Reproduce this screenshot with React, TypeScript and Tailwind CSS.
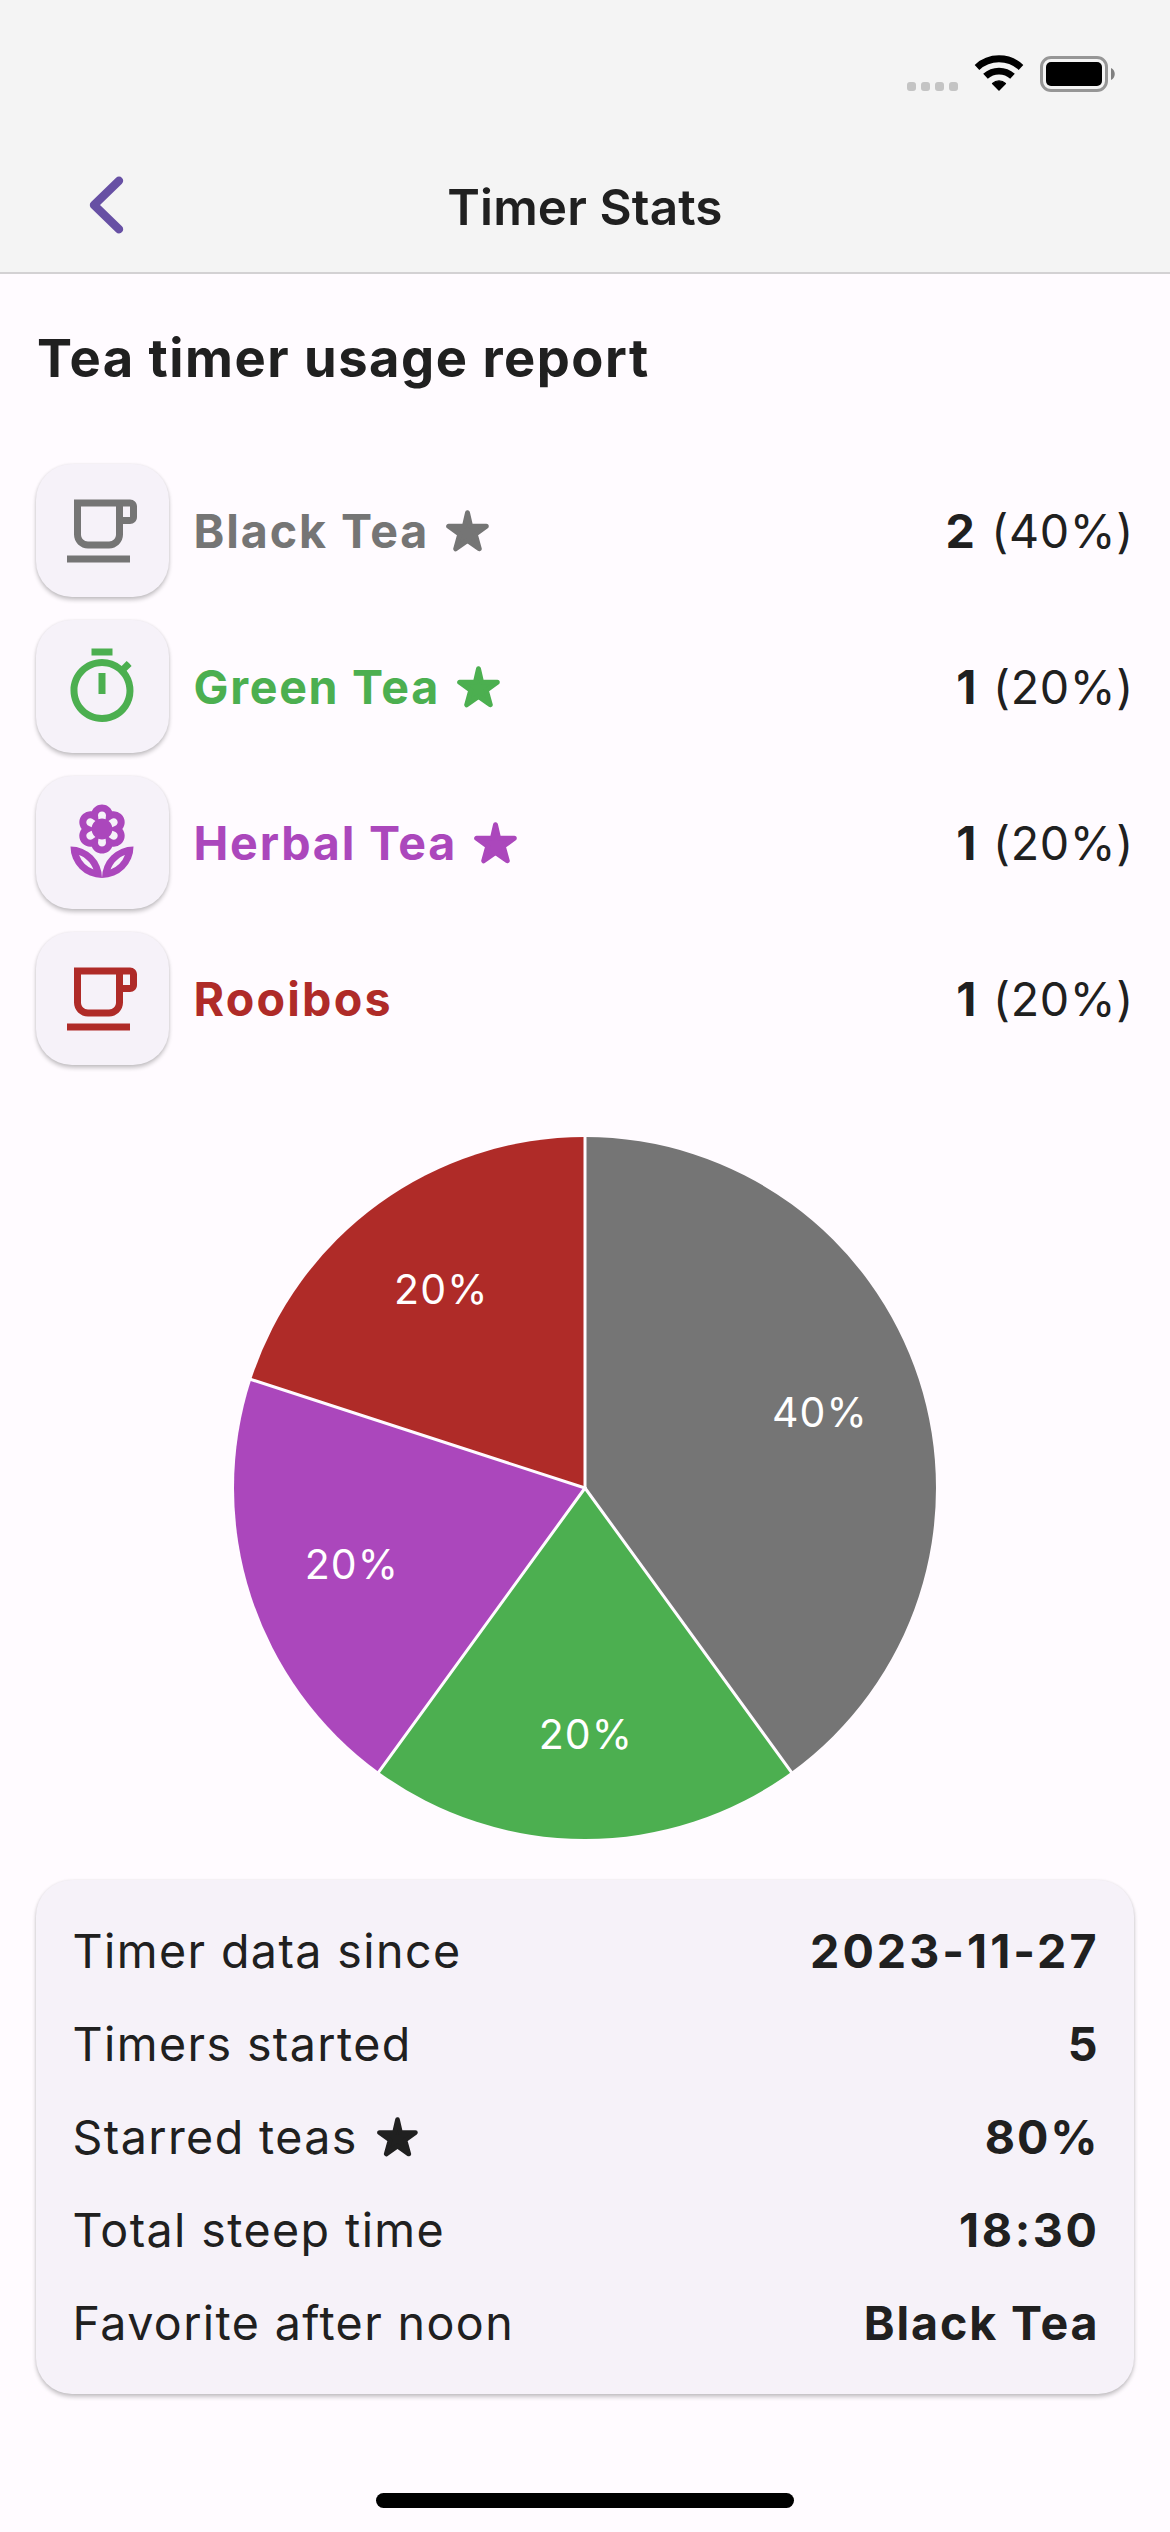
import type { ReactNode } from "react";
import { MdOutlineLocalCafe, MdOutlineLocalFlorist, MdOutlineTimer } from "react-icons/md";

type Tea = {
  name: string;
  starred: boolean;
  count: number;
  percent: number;
  color: string;
  fill: string;
  tracking: string;
  icon: ReactNode;
};

const teas: Tea[] = [
  { name: "Black Tea", starred: true, count: 2, percent: 40, color: "text-[#757575]", fill: "#757575", tracking: "tracking-[1.9px]", icon: <MdOutlineLocalCafe size={84} /> },
  { name: "Green Tea", starred: true, count: 1, percent: 20, color: "text-[#4caf50]", fill: "#4caf50", tracking: "tracking-[1.7px]", icon: <MdOutlineTimer size={84} /> },
  { name: "Herbal Tea", starred: true, count: 1, percent: 20, color: "text-[#ab47bc]", fill: "#ab47bc", tracking: "tracking-[1.8px]", icon: <MdOutlineLocalFlorist size={84} /> },
  { name: "Rooibos", starred: false, count: 1, percent: 20, color: "text-[#af2b28]", fill: "#af2b28", tracking: "tracking-[2.2px]", icon: <MdOutlineLocalCafe size={84} /> },
];

const facts = [
  { label: "Timer data since", value: "2023-11-27", tracking: "tracking-[3px]" },
  { label: "Timers started", value: "5", tracking: "tracking-[1.9px]" },
  { label: "Starred teas", value: "80%", tracking: "tracking-[1.9px]", star: true },
  { label: "Total steep time", value: "18:30", tracking: "tracking-[2.6px]" },
  { label: "Favorite after noon", value: "Black Tea", tracking: "tracking-[1.9px]" },
];

function Star({ className }: { className: string }) {
  return (
    <svg viewBox="0 0 43 42" className={className} fill="currentColor" stroke="currentColor" strokeWidth="5" strokeLinejoin="round">
      <path d="M21.5 2.8 24.6 16.3 40.3 16.3 29.3 24.3 33.3 38.8 21.5 30.4 9.7 38.8 13.7 24.3 2.7 16.3 18.4 16.3Z" />
    </svg>
  );
}

function Wifi() {
  return (
    <svg viewBox="0 0 50 38" className="h-[38px] w-[50px]" fill="none" stroke="#000" strokeWidth="6.8">
      <path d="M3 13.4A32.3 32.3 0 0 1 47 13.4" />
      <path d="M11.5 22.3A20 20 0 0 1 38.5 22.3" />
      <path d="M18.6 29.4A9.4 9.4 0 0 1 31.4 29.4L25 36Z" fill="#000" stroke="#000" strokeWidth="1.4" strokeLinejoin="round" />
    </svg>
  );
}

function StatusBar() {
  return (
    <div className="flex h-[141px] items-start pt-[54px] pr-[55px]">
      <div className="ml-auto mt-[28px] flex gap-[5px]">
        {[0, 1, 2, 3].map((i) => (
          <span key={i} className="size-[9px] rounded-[3px] bg-[#c4c4c4]" />
        ))}
      </div>
      <div className="ml-[16px]">
        <Wifi />
      </div>
      <div className="ml-[16px] mt-[2px] flex items-center gap-[3px]">
        <div className="h-[36px] w-[68px] rounded-[11px] border-3 border-[#969696] p-[3px]">
          <div className="h-full rounded-[5px] bg-black" />
        </div>
        <svg viewBox="0 0 4 12" className="h-[12px] w-[4px]" fill="#808080">
          <path d="M0 0C5 2 5 10 0 12Z" />
        </svg>
      </div>
    </div>
  );
}

function PieChart() {
  const r = 351;
  const point = (turn: number, radius: number) => {
    const a = turn * 2 * Math.PI;
    return [r + radius * Math.sin(a), r - radius * Math.cos(a)];
  };
  let total = 0;
  const slices = teas.map((tea) => {
    const start = total / 100;
    total += tea.percent;
    return { tea, start, end: total / 100 };
  });
  return (
    <svg viewBox="0 0 702 702" className="mx-auto block size-[702px] overflow-visible">
      {slices.map(({ tea, start, end }) => {
        const [x1, y1] = point(start, r);
        const [x2, y2] = point(end, r);
        return <path key={tea.name} d={`M${r} ${r}L${x1} ${y1}A${r} ${r} 0 0 1 ${x2} ${y2}Z`} fill={tea.fill} />;
      })}
      {slices.map(({ tea, start }) => {
        const [x, y] = point(start, r + 1);
        return <line key={tea.name} x1={r} y1={r} x2={x} y2={y} stroke="#fffbff" strokeWidth="3" strokeLinecap="round" />;
      })}
      {slices.map(({ tea, start, end }) => {
        const [x, y] = point((start + end) / 2, 246);
        return (
          <text key={tea.name} x={x + 0.9} y={y + 14.8} textAnchor="middle" fill="#fff" className="text-[41px] font-[370] tracking-[1.1px]">
            {tea.percent}%
          </text>
        );
      })}
    </svg>
  );
}

export default function App() {
  return (
    <div className="flex h-[2532px] w-[1170px] flex-col bg-[#fffbff] font-['Inter',sans-serif] text-[#202020]">
      <header className="h-[274px] shrink-0 border-b-2 border-[#d3d1d3] bg-[#f4f4f4]">
        <StatusBar />
        <div className="grid h-[131px] grid-cols-[1fr_auto_1fr] items-center">
          <svg viewBox="0 0 36 58" className="mb-[3px] ml-[88px] h-[58px] w-[36px]" fill="none" stroke="#6750a4" strokeWidth="8.4" strokeLinecap="round" strokeLinejoin="round">
            <path d="M31 4.8 6 29 31 53.2" />
          </svg>
          <h1 className="text-[49.5px] leading-[60px] font-semibold tracking-[0.1px]">Timer Stats</h1>
        </div>
      </header>

      <main className="flex flex-col px-9">
        <h2 className="mt-[52px] ml-px text-[52.5px] leading-[64px] font-bold tracking-[1.49px]">Tea timer usage report</h2>

        <ul className="mt-[74px] flex flex-col gap-[23px]">
          {teas.map((tea) => (
            <li key={tea.name} className="flex h-[133px] items-center text-[46.6px] leading-[56px]">
              <div className={`flex size-[132.5px] items-center justify-center rounded-[36px] bg-[#f6f2f9] shadow-[0_3px_4px_rgba(0,0,0,0.22),0_0_3px_rgba(0,0,0,0.08)] ${tea.color}`}>{tea.icon}</div>
              <span className={`ml-[25px] flex items-center font-bold ${tea.tracking} ${tea.color}`}>
                {tea.name}
                {tea.starred && <Star className="ml-[17px] h-[42px] w-[43px]" />}
              </span>
              <span className="ml-auto font-[380] tracking-[0.7px]">
                <b className="mr-[2px] font-bold">{tea.count}</b> ({tea.percent}%)
              </span>
            </li>
          ))}
        </ul>

        <div className="mt-[72px]">
          <PieChart />
        </div>

        <dl className="mt-[41px] flex h-[514px] flex-col rounded-[36px] bg-[#f6f2f9] pt-[24px] pr-[34.5px] pb-[25px] pl-[36.5px] shadow-[0_3px_4px_rgba(0,0,0,0.22),0_0_3px_rgba(0,0,0,0.08)]">
          {facts.map((fact) => (
            <div key={fact.label} className="flex h-[93px] items-center justify-between text-[46.6px] leading-[56px]">
              <dt className="flex items-center font-[380] tracking-[1.4px]">
                {fact.label}
                {fact.star && <Star className="ml-[19px] h-[40px] w-[41px]" />}
              </dt>
              <dd className={`font-bold ${fact.tracking}`}>{fact.value}</dd>
            </div>
          ))}
        </dl>
      </main>

      <div className="mx-auto mt-auto mb-[24px] h-[15px] w-[418px] shrink-0 rounded-full bg-black" />
    </div>
  );
}
